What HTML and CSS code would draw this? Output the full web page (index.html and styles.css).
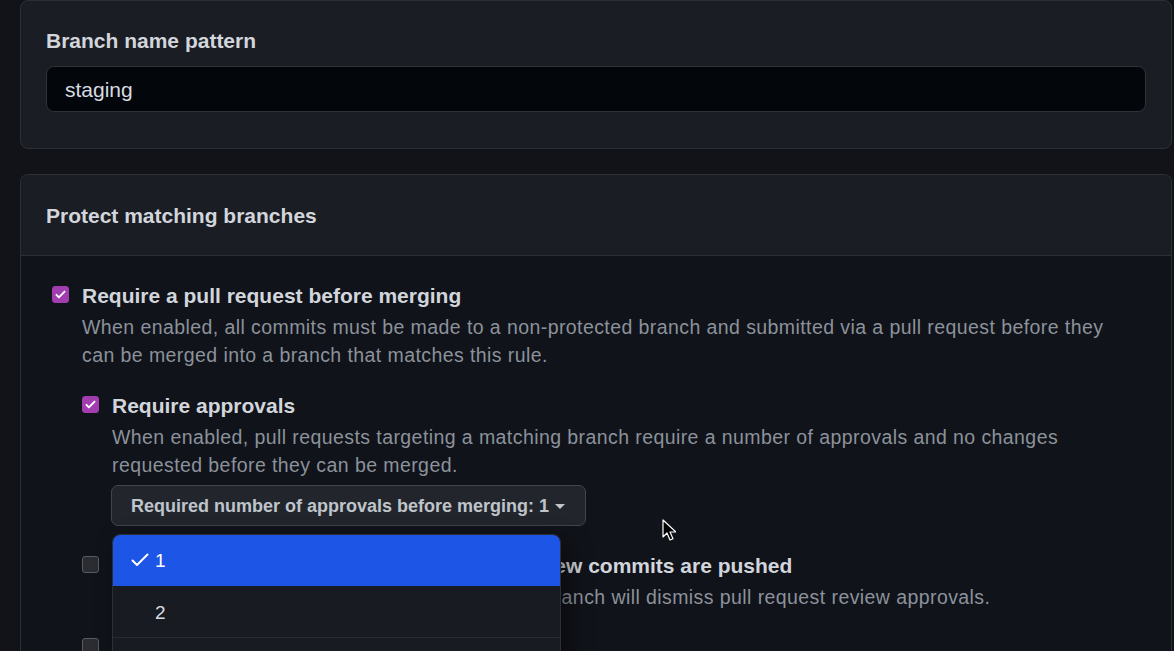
FILE: index.html
```html
<!DOCTYPE html>
<html lang="en">
<head>
<meta charset="utf-8">
<title>Branch protection rule</title>
<link rel="stylesheet" href="styles.css">
</head>
<body>
<main class="page">
  <section class="card card-pattern">
    <label class="field-label" for="pattern">Branch name pattern</label>
    <div class="input">staging</div>
  </section>

  <section class="card card-protect">
    <header class="card-header">Protect matching branches</header>
    <div class="card-body">
      <div class="option">
        <span class="checkbox checked"><svg viewBox="0 0 16 16" width="13" height="13"><path d="M3 8.5l3 3 7-7" fill="none" stroke="#fff" stroke-width="2.4" stroke-linecap="round" stroke-linejoin="round"/></svg></span>
        <div class="option-text">
          <div class="option-title">Require a pull request before merging</div>
          <p class="option-desc">When enabled, all commits must be made to a non-protected branch and submitted via a pull request before they can be merged into a branch that matches this rule.</p>

          <div class="option nested">
            <span class="checkbox checked"><svg viewBox="0 0 16 16" width="13" height="13"><path d="M3 8.5l3 3 7-7" fill="none" stroke="#fff" stroke-width="2.4" stroke-linecap="round" stroke-linejoin="round"/></svg></span>
            <div class="option-text">
              <div class="option-title">Require approvals</div>
              <p class="option-desc">When enabled, pull requests targeting a matching branch require a number of approvals and no changes requested before they can be merged.</p>
              <div class="select-wrap">
                <button class="select-btn">Required number of approvals before merging: 1 <span class="caret"></span></button>
                <ul class="menu">
                  <li class="menu-item selected"><svg class="check" viewBox="0 0 18 14" width="18" height="14"><path d="M1.5 7.5l4.5 4.5 10.5-10.5" fill="none" stroke="#fff" stroke-width="2" stroke-linecap="round" stroke-linejoin="round"/></svg><span>1</span></li>
                  <li class="menu-item"><span>2</span></li>
                  <li class="menu-item"><span>3</span></li>
                </ul>
              </div>
            </div>
          </div>

          <div class="option nested after-select">
            <span class="checkbox"></span>
            <div class="option-text">
              <div class="option-title">Dismiss stale pull request approvals when new commits are pushed</div>
              <p class="option-desc">New reviewable commits pushed to a matching branch will dismiss pull request review approvals.</p>
            </div>
          </div>

          <div class="option nested">
            <span class="checkbox"></span>
            <div class="option-text">
              <div class="option-title">Require review from Code Owners</div>
              <p class="option-desc">Require an approved review in pull requests including files with a designated code owner.</p>
            </div>
          </div>
        </div>
      </div>
    </div>
  </section>

  <svg class="cursor" viewBox="0 0 14 22" width="14" height="22"><path d="M1 1v17l4-4 3 7 3-1.3-3-6.7h6z" fill="#000" stroke="#fff" stroke-width="1.2" stroke-linejoin="round"/></svg>
</main>
</body>
</html>
```

FILE: styles.css
```css
* { box-sizing: border-box; }

html, body {
  margin: 0;
  padding: 0;
  background: #111318;
  height: 100%;
  overflow: hidden;
}

body {
  font-family: "Liberation Sans", Arial, sans-serif;
  color: #d2d6dc;
}

.page {
  position: relative;
  padding-left: 20px;
}

.card {
  width: 1152px;
  border: 1px solid #2b2f36;
  border-radius: 8px;
}

.card-pattern {
  background: #1a1d23;
  padding: 25px 25px 36px 25px;
  display: flex;
  flex-direction: column;
  gap: 10px;
}

.field-label {
  font-size: 21px;
  font-weight: 700;
  line-height: 30px;
  color: #d2d6dc;
}

.input {
  height: 46px;
  background: #03060b;
  border: 1px solid #2e333a;
  border-radius: 8px;
  padding: 2px 18px 0;
  display: flex;
  align-items: center;
  font-size: 21px;
  color: #d8dbe0;
}

.card-protect {
  margin-top: 25px;
  background: #11131a;
  border-bottom: none;
  border-bottom-left-radius: 0;
  border-bottom-right-radius: 0;
}

.card-header {
  background: #1a1d23;
  border-bottom: 1px solid #2b2f36;
  border-radius: 8px 8px 0 0;
  padding: 26px 25px 24px;
  font-size: 21px;
  font-weight: 700;
  line-height: 30px;
}

.card-body {
  padding: 25px 40px 0 25px;
}

.option {
  display: grid;
  grid-template-columns: 36px 1fr;
}

.option.nested {
  grid-template-columns: 30px 1fr;
  margin-top: 22px;
}

.option.nested.after-select {
  margin-top: 25px;
}

.checkbox {
  width: 17px;
  height: 17px;
  margin-top: 5px;
  margin-left: 6px;
  border-radius: 3px;
  background: #2a2c31;
  border: 1px solid #585c62;
  display: flex;
  align-items: center;
  justify-content: center;
}

.option.nested .checkbox { margin-left: 0; }

.checkbox.checked {
  background: #a23db0;
  border-color: #a23db0;
}

.option-title {
  font-size: 21px;
  font-weight: 700;
  line-height: 30px;
  color: #d2d6dc;
}

.option-desc {
  margin: 0;
  padding-top: 2px;
  font-size: 19.5px;
  letter-spacing: 0.42px;
  line-height: 28px;
  color: #8b929a;
}

.select-wrap {
  position: relative;
  margin-top: 6px;
}

.select-btn {
  width: 475px;
  height: 41px;
  margin-left: -1px;
  background: #22262c;
  border: 1px solid #41464e;
  border-radius: 7px;
  padding: 1px 0 0 19px;
  text-align: left;
  font-family: "Liberation Sans", Arial, sans-serif;
  font-size: 18px;
  font-weight: 700;
  color: #bfc4cb;
  display: flex;
  align-items: center;
  gap: 6px;
}

.caret {
  display: inline-block;
  width: 0;
  height: 0;
  border-left: 5px solid transparent;
  border-right: 5px solid transparent;
  border-top: 5px solid #bfc4cb;
}

.menu {
  position: absolute;
  top: 49px;
  left: 0;
  width: 449px;
  margin: 0;
  padding: 0;
  list-style: none;
  background: #181b21;
  border: 1px solid #2b2f36;
  border-radius: 8px 8px 0 0;
  box-shadow: 8px 8px 24px rgba(0, 0, 0, 0.45);
  z-index: 2;
  overflow: hidden;
}

.menu-item {
  height: 52px;
  display: flex;
  align-items: center;
  padding: 3px 0 0 42px;
  font-size: 19px;
  color: #d8dbe0;
  border-bottom: 1px solid #262a31;
  position: relative;
}

.menu-item.selected {
  background: #1d55e6;
  border-bottom-color: #1d55e6;
  border-radius: 6px 6px 0 0;
  color: #ffffff;
  height: 51px;
  padding-top: 1px;
}

.menu-item .check {
  position: absolute;
  left: 18px;
  top: 18px;
}

.cursor {
  position: absolute;
  left: 662px;
  top: 519px;
  z-index: 3;
}
```
